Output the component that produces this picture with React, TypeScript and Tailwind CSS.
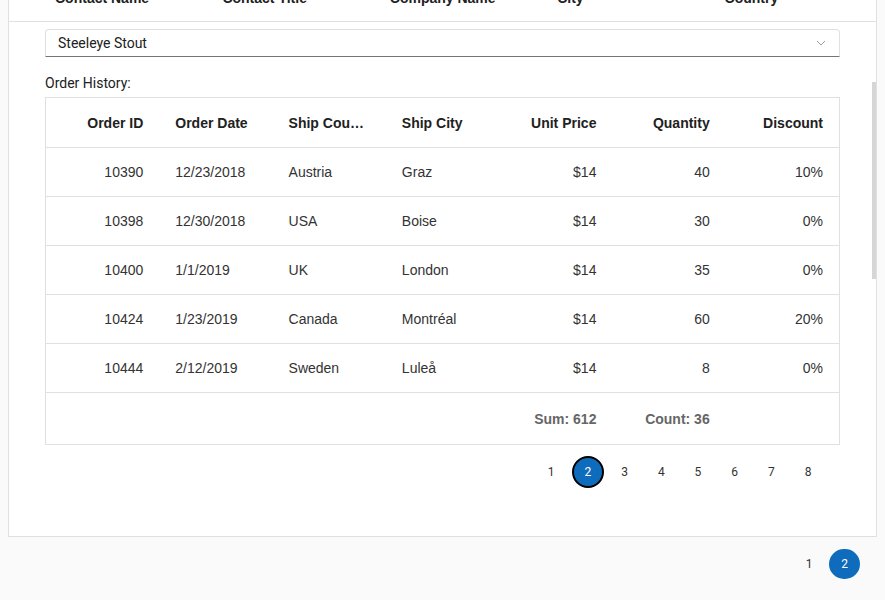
import React from "react";

const rows = [
  ["10390", "12/23/2018", "Austria", "Graz", "$14", "40", "10%"],
  ["10398", "12/30/2018", "USA", "Boise", "$14", "30", "0%"],
  ["10400", "1/1/2019", "UK", "London", "$14", "35", "0%"],
  ["10424", "1/23/2019", "Canada", "Montréal", "$14", "60", "20%"],
  ["10444", "2/12/2019", "Sweden", "Luleå", "$14", "8", "0%"],
];

const align = ["text-right", "text-left", "text-left", "text-left", "text-right", "text-right", "text-right"];

export default function App() {
  return (
    <div className="min-h-screen bg-[#fafafa] px-2 overflow-hidden" style={{ fontFamily: '"Liberation Sans", Arial, sans-serif' }}>
      <div className="relative mt-[-27px] border border-[#e0e0e0] bg-white">
        <div className="grid h-12 grid-cols-[30px_1fr_1fr_1fr_1fr_1fr] items-center border-b border-[#e0e0e0] text-sm font-bold text-[#212121]">
          <div />
          <div className="px-4">Contact Name</div>
          <div className="px-4">Contact Title</div>
          <div className="px-4">Company Name</div>
          <div className="px-4">City</div>
          <div className="px-4">Country</div>
        </div>
        <div className="px-9 pt-[7px] pb-[48px]">
          <div
            className="flex h-[28px] items-center justify-between rounded-t border border-[#e0e0e0] border-b-[#757575] pl-3 pr-3 text-[14px] text-[#212121]"
            style={{ fontFamily: 'Roboto, "Liberation Sans", sans-serif' }}
          >
            <span>Steeleye Stout</span>
            <svg width="10" height="6" viewBox="0 0 10 6" className="mr-[1px]">
              <polyline points="1,1 5,5 9,1" fill="none" stroke="#9e9e9e" strokeWidth="1" />
            </svg>
          </div>
          <div
            className="mt-[16px] mb-[4px] text-[14px] leading-5 text-[#212121]"
            style={{ fontFamily: 'Roboto, "Liberation Sans", sans-serif' }}
          >
            Order History:
          </div>
          <div className="border border-[#e0e0e0] text-sm text-[#333]">
            <div className="grid h-[50px] grid-cols-7 items-center border-b border-[#e0e0e0] font-bold text-[#212121]">
              {["Order ID", "Order Date", "Ship Country", "Ship City", "Unit Price", "Quantity", "Discount"].map((h, i) => (
                <div key={h} className={`truncate px-4 ${align[i]}`}>{h}</div>
              ))}
            </div>
            {rows.map((r) => (
              <div key={r[0]} className="grid h-[49px] grid-cols-7 items-center border-b border-[#e0e0e0]">
                {r.map((c, i) => (
                  <div key={i} className={`truncate px-4 ${align[i]}`}>{c}</div>
                ))}
              </div>
            ))}
            <div className="grid h-[51px] grid-cols-7 items-center font-bold text-[#666]">
              <div />
              <div />
              <div />
              <div />
              <div className="px-4 text-right">Sum: 612</div>
              <div className="px-4 text-right">Count: 36</div>
              <div />
            </div>
          </div>
          <div
            className="mt-[11px] flex justify-end gap-[4.7px] pr-[16px] text-[12px] text-[#333]"
            style={{ fontFamily: 'Roboto, "Liberation Sans", sans-serif' }}
          >
            {[1, 2, 3, 4, 5, 6, 7, 8].map((n) =>
              n === 2 ? (
                <div key={n} className="flex h-8 w-8 items-center justify-center rounded-full border-2 border-black bg-[#0f6cbd] text-white">
                  {n}
                </div>
              ) : (
                <div key={n} className="flex h-8 w-8 items-center justify-center">{n}</div>
              )
            )}
          </div>
        </div>
        <div className="absolute right-0 top-[108px] h-[197px] w-[4px] bg-[#d6d6d6]" />
      </div>
      <div
        className="mt-[12px] flex justify-end gap-[4px] pr-[17px] text-[12px] text-[#333]"
        style={{ fontFamily: 'Roboto, "Liberation Sans", sans-serif' }}
      >
        <div className="flex h-[30px] w-[32px] items-center justify-center">1</div>
        <div className="flex h-[30px] w-[31px] items-center justify-center rounded-full bg-[#0f6cbd] text-white">2</div>
      </div>
    </div>
  );
}
